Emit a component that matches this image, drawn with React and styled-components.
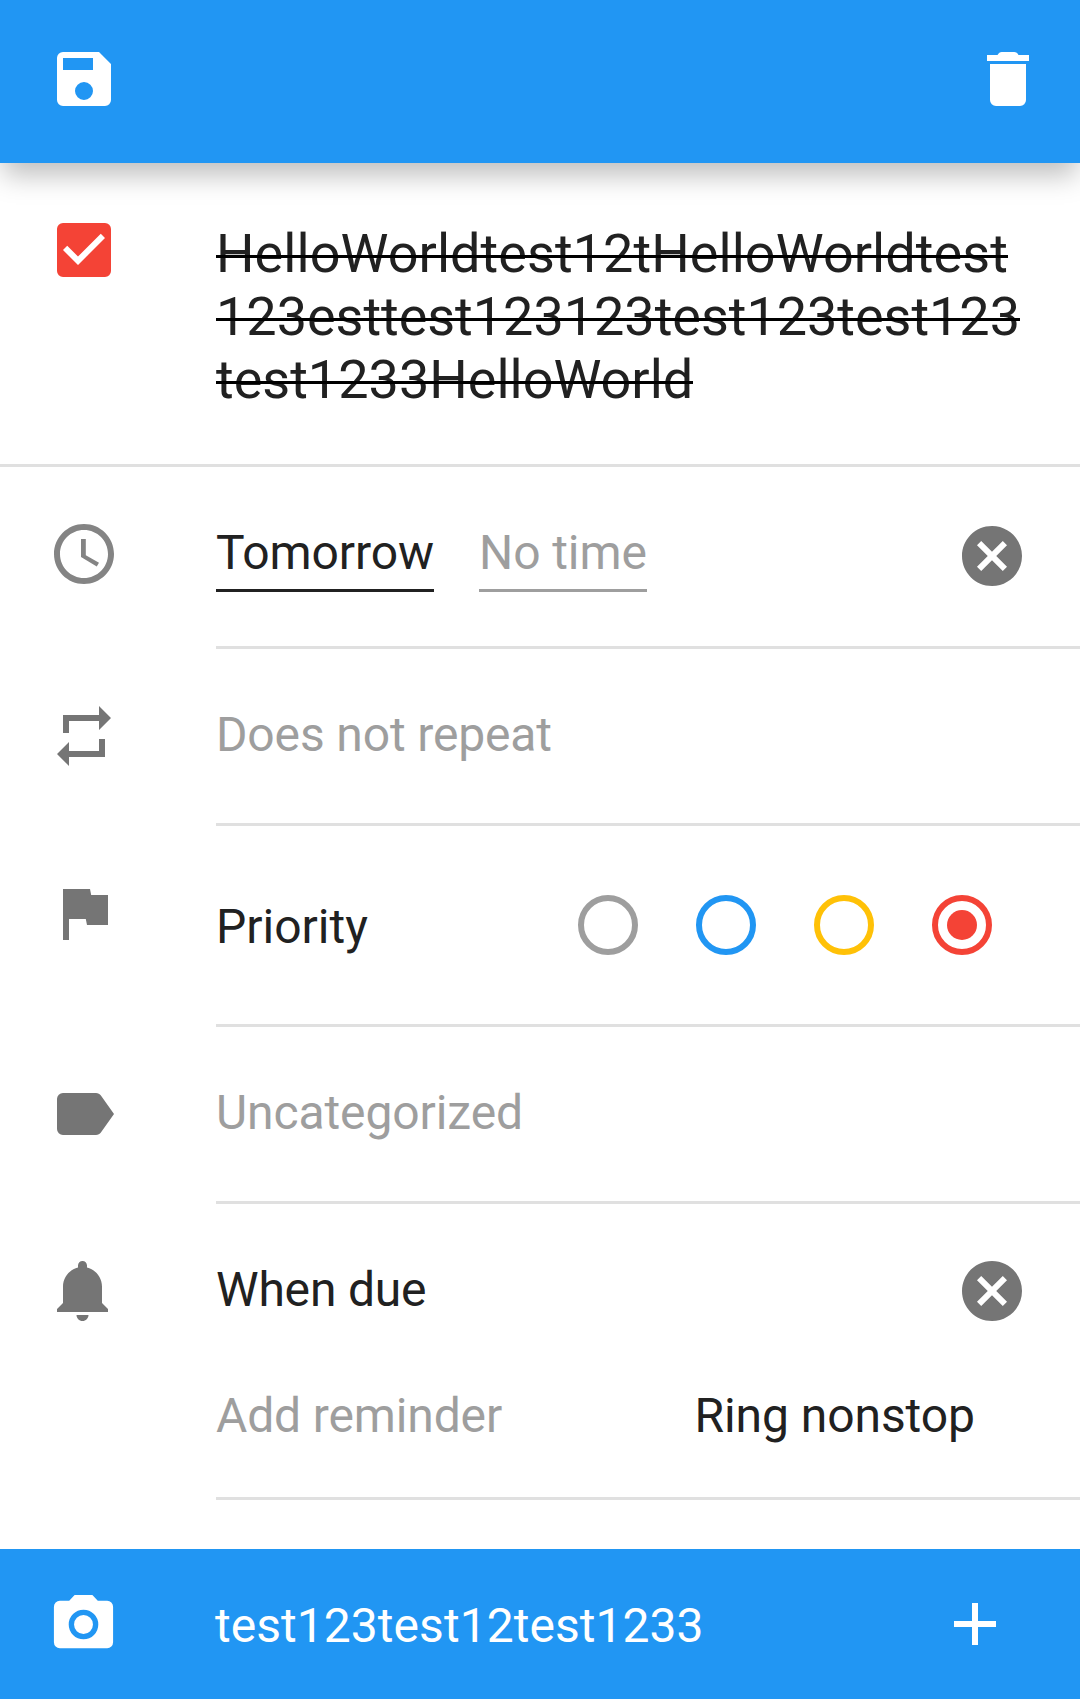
import React from "react";
import styled, { createGlobalStyle } from "styled-components";

const GlobalStyle = createGlobalStyle`
  * { box-sizing: border-box; }
  body { margin: 0; background: #fff; }
`;

const Screen = styled.div`
  display: flex;
  flex-direction: column;
  width: 1080px;
  height: 1699px;
  overflow: hidden;
  background: #fff;
  color: #212121;
  font-family: Roboto, "Liberation Sans", sans-serif;
  font-size: 48px;
  line-height: 57px;
`;

const Toolbar = styled.header`
  position: relative;
  display: flex;
  justify-content: space-between;
  flex: none;
  height: 163px;
  padding: 43px 36px 0 48px;
  background: #2196f3;
  box-shadow: 0 15px 26px -3px rgba(0, 0, 0, 0.26);
`;

const IconButton = styled.button`
  display: block;
  flex: none;
  width: 72px;
  height: 72px;
  margin: 0;
  padding: 0;
  border: 0;
  background: none;
  color: ${(p) => p.$color || "#fff"};
`;

const Glyph = styled.svg`
  display: block;
  flex: none;
  width: ${(p) => p.$size}px;
  height: ${(p) => p.$size}px;
  fill: currentColor;
`;

const Form = styled.main`
  flex: 1;
`;

const Row = styled.section`
  display: grid;
  grid-template-columns: 72px 1fr;
  column-gap: 96px;
  height: ${(p) => p.$height}px;
  padding-left: 48px;
  border-bottom: ${(p) => (p.$fullDivider ? "3px solid #e0e0e0" : "0")};
`;

const RowIcon = styled.div`
  padding-top: 51px;
  color: ${(p) => p.$color || "#757575"};
`;

const RowBody = styled.div`
  display: flex;
  flex-direction: column;
  padding-top: ${(p) => p.$top ?? 57}px;
  border-bottom: ${(p) => (p.$noDivider ? "0" : "3px solid #e0e0e0")};
`;

const Line = styled.div`
  display: flex;
  align-items: flex-start;
  justify-content: space-between;
  padding-right: ${(p) => p.$right || 0}px;
  margin-top: ${(p) => p.$gap || 0}px;
`;

const Title = styled.h1`
  display: flex;
  flex-direction: column;
  align-items: flex-start;
  margin: 0;
  font-size: 54px;
  font-weight: 400;
  line-height: 63px;
`;

const StruckLine = styled.span`
  position: relative;
  letter-spacing: ${(p) => p.$tracking}px;
  white-space: nowrap;

  &::after {
    content: "";
    position: absolute;
    top: 33px;
    left: 0;
    right: 0;
    height: 3px;
    background: #000;
  }
`;

const Text = styled.span`
  margin-top: ${(p) => p.$shift || 0}px;
  color: ${(p) => (p.$muted ? "#9e9e9e" : "inherit")};
  letter-spacing: ${(p) => p.$tracking || 0}px;
`;

const Fields = styled.div`
  display: flex;
  gap: 45px;
`;

const Field = styled.span`
  width: ${(p) => p.$width}px;
  padding-bottom: 8px;
  color: ${(p) => (p.$muted ? "#9e9e9e" : "#212121")};
  letter-spacing: -0.1px;
  white-space: nowrap;
  border-bottom: 3px solid currentColor;
`;

const ClearButton = styled(IconButton)`
  margin-top: ${(p) => p.$shift}px;
`;

const Radios = styled.div`
  display: flex;
  gap: 58px;
  margin-top: -3px;
`;

const Radio = styled.span`
  display: grid;
  place-items: center;
  width: 60px;
  height: 60px;
  border: 6px solid ${(p) => p.$color};
  border-radius: 50%;

  &::after {
    content: "";
    width: 30px;
    height: 30px;
    border-radius: 50%;
    background: ${(p) => (p.$checked ? p.$color : "transparent")};
  }
`;

const Footer = styled.footer`
  display: flex;
  align-items: flex-start;
  flex: none;
  height: 150px;
  padding: 39px 69px 0 48px;
  background: #2196f3;
  color: #fff;
`;

const CameraSlot = styled.div`
  width: 72px;
  padding-top: 0.5px;
`;

const FooterText = styled.span`
  flex: 1;
  margin: 9px 0 0 95px;
  letter-spacing: 0.04px;
`;

const paths = {
  save: "M17 3H5a2 2 0 0 0-2 2v14a2 2 0 0 0 2 2h14a2 2 0 0 0 2-2V7l-4-4zm-5 16a3 3 0 1 1 0-6 3 3 0 0 1 0 6zm3-10H5V5h10v4z",
  trash: "M6 19a2 2 0 0 0 2 2h8a2 2 0 0 0 2-2V7H6v12zM19 4h-3.5c-.4-.7-.8-1-1.4-1H9.9c-.6 0-1 .3-1.4 1H5v2h14V4z",
  checkbox: "M19 3H5a2 2 0 0 0-2 2v14a2 2 0 0 0 2 2h14a2 2 0 0 0 2-2V5a2 2 0 0 0-2-2zm-9 14l-5-5 1.41-1.41L10 14.17l7.59-7.59L19 8l-9 9z",
  clock: "M11.99 2C6.47 2 2 6.48 2 12s4.47 10 9.99 10C17.52 22 22 17.52 22 12S17.52 2 11.99 2zM12 20c-4.42 0-8-3.58-8-8s3.58-8 8-8 8 3.58 8 8-3.58 8-8 8zm.6-13H11v6l5.25 3.15.75-1.23-4.4-2.5z",
  repeat: "M7 7h10v3l4-4-4-4v3H5v6h2V7zm10 10H7v-3l-4 4 4 4v-3h12v-6h-2v4z",
  flag: "M14.4 6L14 4H5v17h2v-7h5.6l.4 2h7V6z",
  label: "M17.63 5.84C17.27 5.33 16.67 5 16 5H5a2 2 0 0 0-2 2v10a2 2 0 0 0 2 2h11c.67 0 1.27-.33 1.63-.84L22 12l-4.37-6.16z",
  bell: "M11.5 22c1.1 0 2-.9 2-2h-4c0 1.1.9 2 2 2zm6.5-6v-5.5c0-3.07-2.13-5.64-5-6.32V3.5c0-.83-.67-1.5-1.5-1.5S10 2.67 10 3.5v.68c-2.87.68-5 3.25-5 6.32V16l-2 2v1h17v-1l-2-2z",
  cancel: "M12 2C6.47 2 2 6.47 2 12s4.47 10 10 10 10-4.47 10-10S17.53 2 12 2zm5 13.59L15.59 17 12 13.41 8.41 17 7 15.59 10.59 12 7 8.41 8.41 7 12 10.59 15.59 7 17 8.41 13.41 12 17 15.59z",
  camera: "M9 2L7.17 4H4a2 2 0 0 0-2 2v12a2 2 0 0 0 2 2h16a2 2 0 0 0 2-2V6a2 2 0 0 0-2-2h-3.17L15 2H9zm3 15a5 5 0 1 1 0-10 5 5 0 0 1 0 10zm0-1.8a3.2 3.2 0 1 0 0-6.4 3.2 3.2 0 0 0 0 6.4z",
  plus: "M19 13h-6v6h-2v-6H5v-2h6V5h2v6h6v2z",
};

const Icon = ({ name, size = 72 }) => (
  <Glyph viewBox="0 0 24 24" $size={size} aria-hidden="true">
    <path d={paths[name]} />
  </Glyph>
);

const priorities = [
  { color: "#9e9e9e" },
  { color: "#2196f3" },
  { color: "#ffc107" },
  { color: "#f44336", checked: true },
];

export default function App() {
  return (
    <>
      <GlobalStyle />
      <Screen>
        <Toolbar>
          <IconButton aria-label="Save"><Icon name="save" /></IconButton>
          <IconButton aria-label="Delete"><Icon name="trash" /></IconButton>
        </Toolbar>
        <Form>
          <Row $height={304} $fullDivider>
            <RowIcon $color="#f44336"><Icon name="checkbox" /></RowIcon>
            <RowBody $top={59} $noDivider>
              <Title>
                <StruckLine $tracking={0.06}>HelloWorldtest12tHelloWorldtest</StruckLine>
                <StruckLine $tracking={-0.03}>123esttest123123test123test123</StruckLine>
                <StruckLine $tracking={0}>test1233HelloWorld</StruckLine>
              </Title>
            </RowBody>
          </Row>
          <Row $height={182}>
            <RowIcon $color="#848484"><Icon name="clock" /></RowIcon>
            <RowBody>
              <Line $right={52}>
                <Fields>
                  <Field $width={218}>Tomorrow</Field>
                  <Field $width={168} $muted>No time</Field>
                </Fields>
                <ClearButton $shift={-4} $color="#757575" aria-label="Clear date">
                  <Icon name="cancel" />
                </ClearButton>
              </Line>
            </RowBody>
          </Row>
          <Row $height={177}>
            <RowIcon><Icon name="repeat" /></RowIcon>
            <RowBody><Text $muted $tracking={-0.14}>Does not repeat</Text></RowBody>
          </Row>
          <Row $height={201}>
            <RowIcon><Icon name="flag" /></RowIcon>
            <RowBody $top={72}>
              <Line $right={88}>
                <Text>Priority</Text>
                <Radios>
                  {priorities.map((p) => (
                    <Radio key={p.color} $color={p.color} $checked={p.checked} />
                  ))}
                </Radios>
              </Line>
            </RowBody>
          </Row>
          <Row $height={177}>
            <RowIcon><Icon name="label" /></RowIcon>
            <RowBody><Text $muted $tracking={-0.1}>Uncategorized</Text></RowBody>
          </Row>
          <Row $height={296}>
            <RowIcon><Icon name="bell" /></RowIcon>
            <RowBody $top={51}>
              <Line $right={52}>
                <Text $shift={6} $tracking={-0.2}>When due</Text>
                <ClearButton $shift={0} $color="#757575" aria-label="Remove reminder">
                  <Icon name="cancel" />
                </ClearButton>
              </Line>
              <Line $right={105} $gap={60}>
                <Text $muted $tracking={-0.14}>Add reminder</Text>
                <Text $tracking={-0.06}>Ring nonstop</Text>
              </Line>
            </RowBody>
          </Row>
        </Form>
        <Footer>
          <CameraSlot><Icon name="camera" size={71} /></CameraSlot>
          <FooterText>test123test12test1233</FooterText>
          <IconButton aria-label="Add"><Icon name="plus" /></IconButton>
        </Footer>
      </Screen>
    </>
  );
}
